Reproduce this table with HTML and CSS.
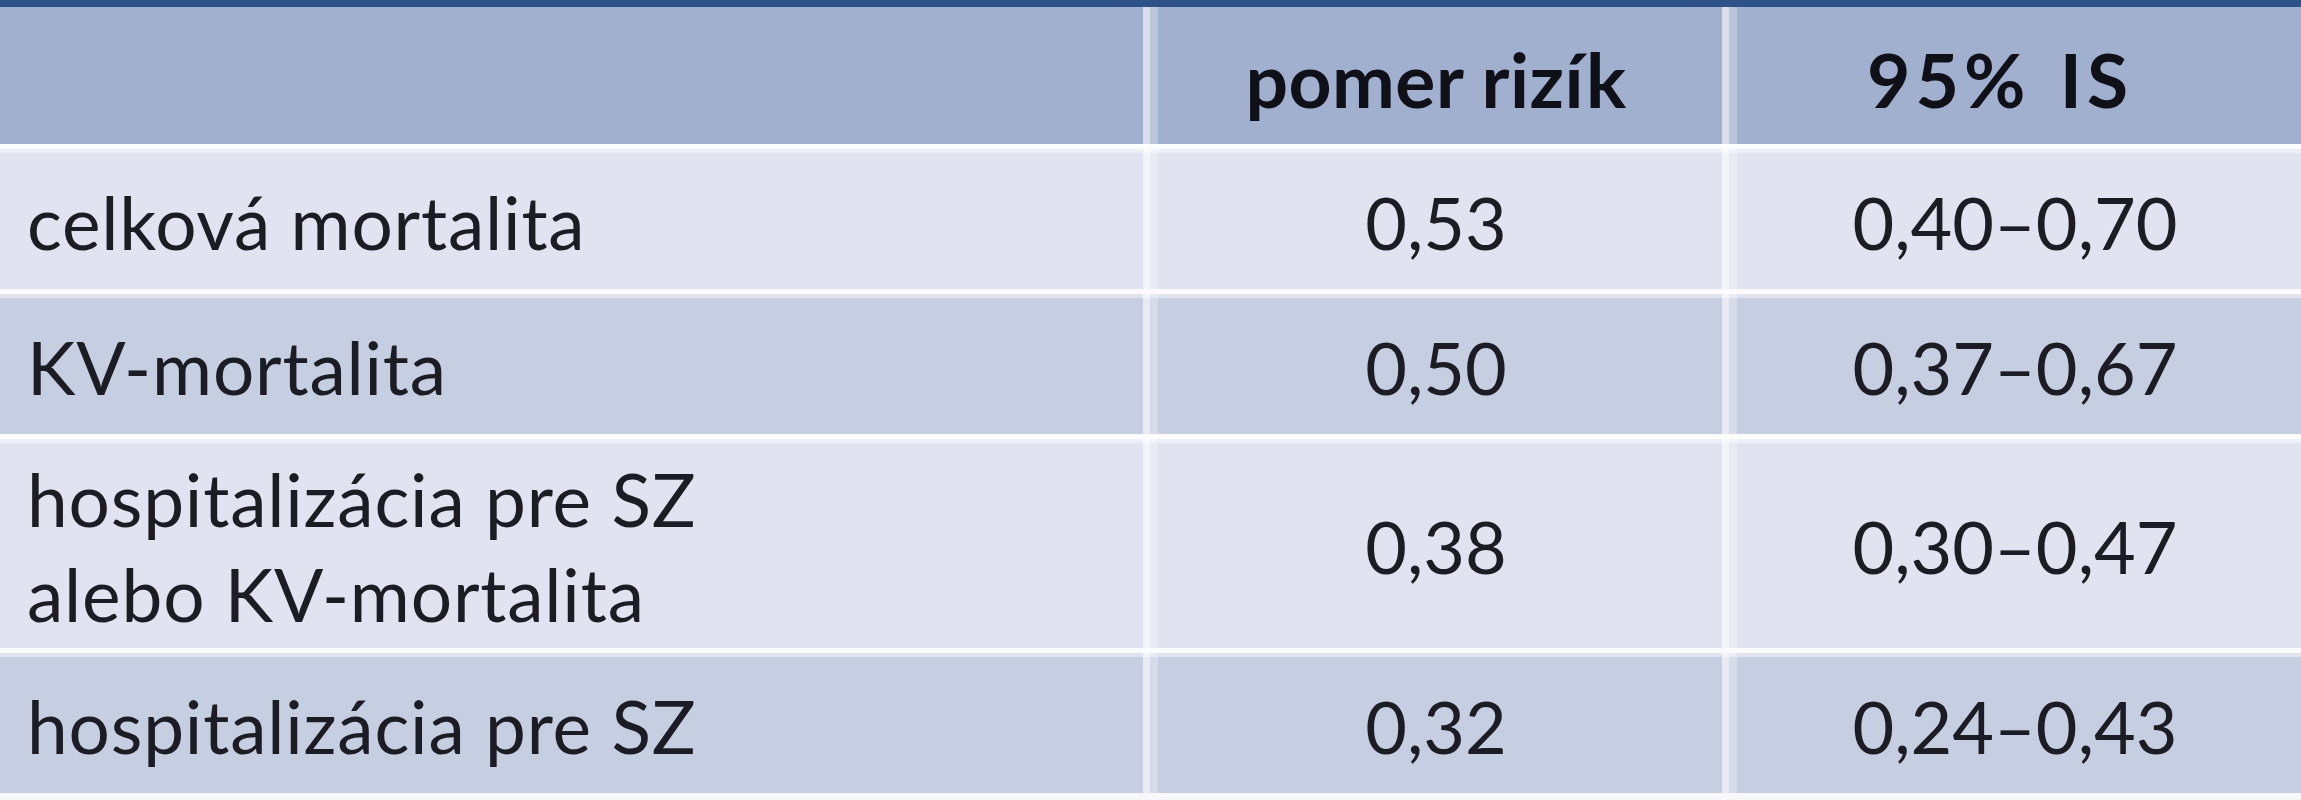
FILE: index.html
```html
<!DOCTYPE html>
<html lang="sk">
<head>
<meta charset="utf-8">
<link rel="stylesheet" href="styles.css">
<title>Tabuľka</title>
</head>
<body>
<div class="table">
  <div class="row head">
    <div class="cell label"></div>
    <div class="cell num">pomer rizík</div>
    <div class="cell num wide">95% IS</div>
  </div>
  <div class="row light">
    <div class="cell label">celková mortalita</div>
    <div class="cell num">0,53</div>
    <div class="cell num">0,40–0,70</div>
  </div>
  <div class="row dark">
    <div class="cell label">KV-mortalita</div>
    <div class="cell num">0,50</div>
    <div class="cell num">0,37–0,67</div>
  </div>
  <div class="row light tall">
    <div class="cell label">hospitalizácia pre SZ<br>alebo KV-mortalita</div>
    <div class="cell num">0,38</div>
    <div class="cell num">0,30–0,47</div>
  </div>
  <div class="row dark">
    <div class="cell label">hospitalizácia pre SZ</div>
    <div class="cell num">0,32</div>
    <div class="cell num">0,24–0,43</div>
  </div>
</div>
</body>
</html>
```
FILE: styles.css
```css
html, body {
  margin: 0;
  padding: 0;
  background: #ffffff;
}
.table {
  width: 2301px;
  border-top: 7px solid #2c5287;
  border-bottom: 8px solid #f7f8fb;
  font-family: Lato, "Open Sans", sans-serif;
  font-size: 72px;
  color: #1c1c24;
}
.row {
  display: grid;
  grid-template-columns: 1143px 579px 579px;
  border-top: 5px solid rgba(255,255,255,0.92);
  box-shadow: inset 0 4px 0 rgba(255,255,255,0.45);
  height: 145px;
  box-sizing: border-box;
}
.row.head {
  background: #a1b0ce;
  border-top: none;
  box-shadow: none;
  height: 137px;
  font-weight: 700;
  font-size: 75px;
  letter-spacing: 0.5px;
  color: #101018;
}
.row.light { background: #e1e4f0; }
.row.dark { background: #c6cee2; }
.row.tall { height: 214px; }
.cell {
  display: flex;
  align-items: center;
  padding-top: 6px;
  box-sizing: border-box;
  line-height: 95px;
}
.head .cell { padding-top: 8px; }
.label {
  padding-left: 27px;
  font-size: 73px;
  letter-spacing: 0.8px;
}
.num {
  justify-content: center;
  border-left: 7px solid rgba(255,255,255,0.6);
  box-shadow: inset 8px 0 0 rgba(255,255,255,0.28);
}
.head .wide {
  letter-spacing: 5px;
  word-spacing: 6px;
  padding-right: 30px;
}
```
